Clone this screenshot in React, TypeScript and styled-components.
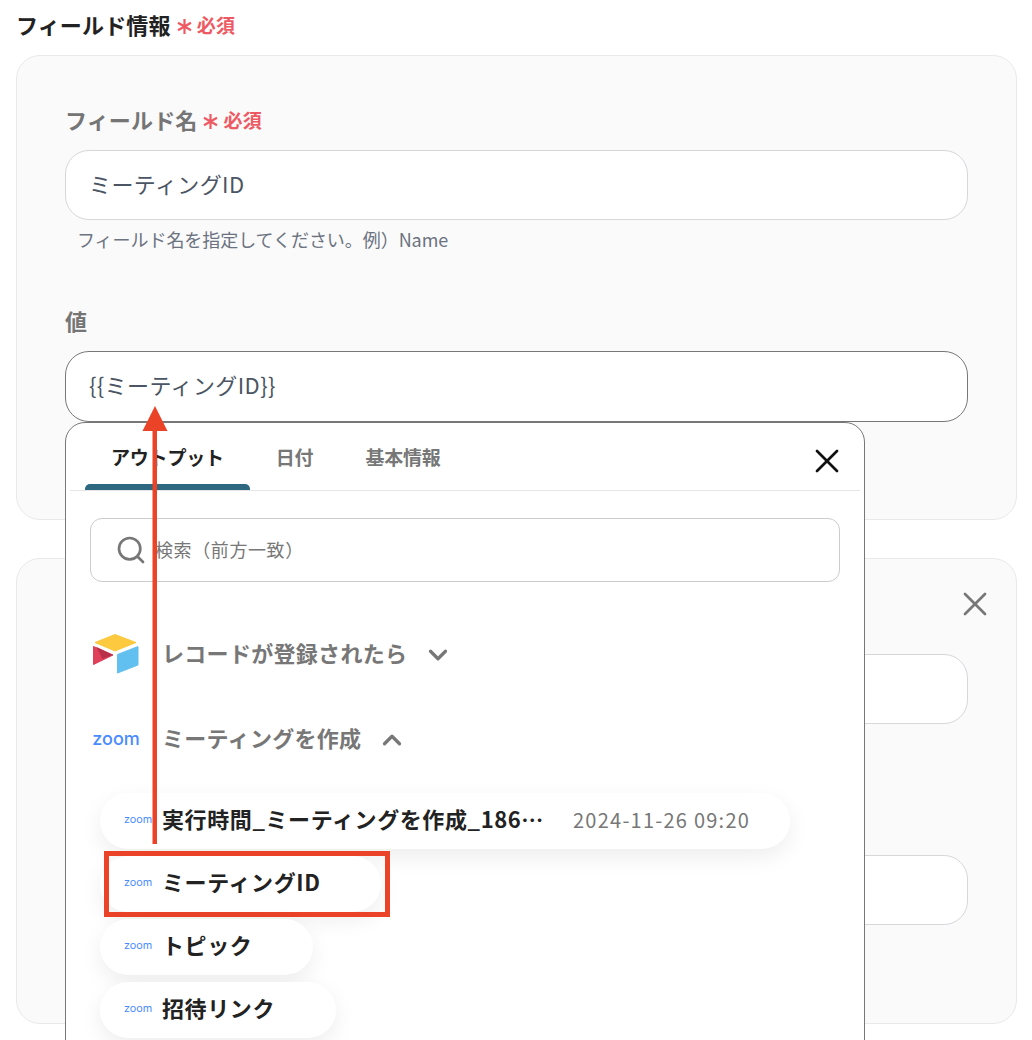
import styled, { createGlobalStyle } from "styled-components";
import { ChevronDown, ChevronUp, Search, X } from "lucide-react";

const GlobalStyle = createGlobalStyle`
  html, body {
    margin: 0;
    height: 1040px;
    overflow: hidden;
    background: #fff;
  }
  * {
    box-sizing: border-box;
  }
  body {
    font-family: "Noto Sans CJK JP", "Noto Sans", sans-serif;
  }
`;

const Page = styled.div`
  position: relative;
  height: 1040px;
  overflow: hidden;
  padding: 11px 15px 0 16px;
`;

const Heading = styled.div<{ $muted?: boolean }>`
  display: flex;
  align-items: center;
  height: 30px;
  padding-bottom: 3px;
  font-size: 22px;
  font-weight: 700;
  line-height: 27px;
  letter-spacing: 0.15px;
  color: ${(p) => (p.$muted ? "#757575" : "#222")};
`;

const Required = styled.span`
  display: inline-flex;
  align-items: center;
  margin-left: 6px;
  font-size: 19px;
  font-weight: 700;
  letter-spacing: 0.3px;
  color: #ee5a63;

  svg {
    margin-right: 5px;
    margin-top: 3px;
  }
`;

const Card = styled.section`
  position: relative;
  margin-top: 14px;
  padding: 50px 48px 97px;
  background: #fafafa;
  border: 1px solid #e9e9e9;
  border-radius: 24px;

  & + & {
    margin-top: 38px;
    padding-top: 51px;
    padding-bottom: 98px;
  }
`;

const FieldBlock = styled.div`
  position: relative;

  & + & {
    margin-top: 58px;
  }
`;

const TextBox = styled.div<{ $active?: boolean }>`
  display: flex;
  align-items: center;
  height: ${(p) => (p.$active ? 71 : 70)}px;
  margin-top: 14px;
  padding: 0 23px 5px;
  background: #fff;
  border: 1px solid ${(p) => (p.$active ? "#777" : "#d5d7da")};
  border-radius: 24px;
  font-size: 22px;
  letter-spacing: 0.4px;
  color: #4b5563;
`;

const Hint = styled.div`
  min-height: 20px;
  margin-top: 9px;
  padding-left: 12px;
  font-size: 18px;
  line-height: 20px;
  letter-spacing: -0.05px;
  color: #6b7280;
`;

const CardClose = styled.button`
  position: absolute;
  top: 25px;
  right: 21px;
  display: flex;
  padding: 0;
  border: none;
  background: none;
  color: #777;
`;

const Popup = styled.div`
  position: absolute;
  top: 100%;
  left: 0;
  z-index: 2;
  width: 800px;
  height: 640px;
  background: #fff;
  border: 1px solid #777;
  border-radius: 20px;
  padding: 0 4px;
`;

const PopupClose = styled.button`
  position: absolute;
  top: 18px;
  right: 17px;
  display: flex;
  padding: 0;
  border: none;
  background: none;
  color: #111;
`;

const Tabs = styled.div`
  display: flex;
  height: 68px;
  padding-left: 15px;
  border-bottom: 1px solid #e5e5e5;
`;

const Tab = styled.div<{ $selected?: boolean }>`
  position: relative;
  display: flex;
  align-items: center;
  padding: 0 26px;
  font-size: 19px;
  font-weight: 700;
  letter-spacing: -0.2px;
  color: ${(p) => (p.$selected ? "#222" : "#777")};

  ${(p) =>
    p.$selected &&
    `&::after {
      content: "";
      position: absolute;
      left: 0;
      right: 0;
      bottom: 0;
      height: 6px;
      background: #2d6880;
      border-radius: 5px 5px 0 0;
    }`}
`;

const SearchBox = styled.div`
  display: flex;
  align-items: center;
  gap: 8px;
  height: 64px;
  margin: 27px 20px 0;
  padding-left: 24px;
  border: 1px solid #ccc;
  border-radius: 12px;
  font-size: 18px;
  letter-spacing: 0.6px;
  color: #777;
`;

const SearchHint = styled.span`
  padding-bottom: 2px;
`;

const Groups = styled.div`
  margin-top: 29px;
  padding-left: 23px;
`;

const GroupRow = styled.div`
  display: flex;
  align-items: center;
  height: 85px;
`;

const GroupLogo = styled.div`
  display: flex;
  justify-content: center;
  width: 46px;
  margin-right: 23px;
`;

const GroupTitle = styled.span`
  padding-bottom: 3px;
  font-size: 22px;
  font-weight: 700;
  letter-spacing: 0.3px;
  color: #777;
`;

const GroupChevron = styled.span`
  display: flex;
  margin-left: 16px;
  padding-top: 3px;
  color: #777;
`;

const ZoomMark = styled.span<{ $small?: boolean }>`
  font-family: Inter, "Liberation Sans", sans-serif;
  font-size: ${(p) => (p.$small ? 10.8 : 18)}px;
  font-weight: ${(p) => (p.$small ? 400 : 500)};
  line-height: 1;
  color: #4a8cff;
`;

const Pills = styled.div`
  display: flex;
  flex-direction: column;
  align-items: flex-start;
  gap: 7px;
  margin-top: 12px;
  padding-left: 30px;
`;

const Pill = styled.div`
  position: relative;
  display: flex;
  align-items: center;
  height: 56px;
  padding: 0 42px 4px 24px;
  background: #fff;
  border-radius: 28px;
  box-shadow: 0 8px 22px rgba(0, 0, 0, 0.07);
  white-space: nowrap;
`;

const PillLogo = styled.span`
  display: flex;
  width: 30px;
  margin-right: 8px;
  padding-top: 3px;
`;

const PillLabel = styled.span`
  padding: 0 19px 2px 0;
  font-size: 22px;
  font-weight: 700;
  letter-spacing: 0.6px;
  color: #222;
`;

const PillValue = styled.span`
  margin: 0 -2px 0 10px;
  font-size: 20px;
  letter-spacing: 1.25px;
  color: #777;
`;

const Highlight = styled.span`
  position: absolute;
  top: -5px;
  left: 4px;
  right: -9px;
  bottom: -5px;
  border: 5px solid #ea4327;
`;

const Arrow = styled.svg`
  position: absolute;
  top: 406px;
  left: 142px;
  z-index: 3;
`;

function AirtableLogo() {
  return (
    <svg width="46" height="40" viewBox="0 0 46 40">
      <path d="M22 .5 43 8.5 22 17 2 8.5Z" fill="#fcc93f" stroke="#fcc93f" strokeLinejoin="round" />
      <path d="M45 12.5V31L24.5 39V20.5Z" fill="#62c0f0" stroke="#62c0f0" strokeLinejoin="round" />
      <path d="M.5 12.5 20 21 .5 30.5Z" fill="#e0405a" stroke="#e0405a" strokeLinejoin="round" />
      <path d="M3.5 13 20 21 9.5 25Z" fill="#b83049" />
    </svg>
  );
}

function RequiredMark() {
  return (
    <Required>
      <svg width="15" height="15" viewBox="0 0 15 15" stroke="#ee5a63" strokeWidth="2.2">
        <path d="M7.5 0v15M1 3.7l13 7.6M14 3.7 1 11.3" />
      </svg>
      必須
    </Required>
  );
}

function PillRow({ label, value, marked }: { label: string; value?: string; marked?: boolean }) {
  return (
    <Pill>
      <PillLogo>
        <ZoomMark $small>zoom</ZoomMark>
      </PillLogo>
      <PillLabel>{label}</PillLabel>
      {value && <PillValue>{value}</PillValue>}
      {marked && <Highlight />}
    </Pill>
  );
}

export default function App() {
  return (
    <Page>
      <GlobalStyle />

      <Heading>
        フィールド情報
        <RequiredMark />
      </Heading>

      <Card>
        <FieldBlock>
          <Heading $muted>
            フィールド名
            <RequiredMark />
          </Heading>
          <TextBox>ミーティングID</TextBox>
          <Hint>フィールド名を指定してください。例）Name</Hint>
        </FieldBlock>

        <FieldBlock>
          <Heading $muted>値</Heading>
          <TextBox $active>{"{{ミーティングID}}"}</TextBox>

          <Popup>
            <Tabs>
              <Tab $selected>アウトプット</Tab>
              <Tab>日付</Tab>
              <Tab>基本情報</Tab>
            </Tabs>
            <PopupClose>
              <X size={40} strokeWidth={1.6} />
            </PopupClose>

            <SearchBox>
              <Search size={32} strokeWidth={2} color="#777" />
              <SearchHint>検索（前方一致）</SearchHint>
            </SearchBox>

            <Groups>
              <GroupRow>
                <GroupLogo>
                  <AirtableLogo />
                </GroupLogo>
                <GroupTitle>レコードが登録されたら</GroupTitle>
                <GroupChevron>
                  <ChevronDown size={30} strokeWidth={2.6} />
                </GroupChevron>
              </GroupRow>
              <GroupRow>
                <GroupLogo>
                  <ZoomMark>zoom</ZoomMark>
                </GroupLogo>
                <GroupTitle>ミーティングを作成</GroupTitle>
                <GroupChevron>
                  <ChevronUp size={30} strokeWidth={2.6} />
                </GroupChevron>
              </GroupRow>
            </Groups>

            <Pills>
              <PillRow label="実行時間_ミーティングを作成_186…" value="2024-11-26 09:20" />
              <PillRow label="ミーティングID" marked />
              <PillRow label="トピック" />
              <PillRow label="招待リンク" />
            </Pills>
          </Popup>
        </FieldBlock>
      </Card>

      <Card>
        <CardClose>
          <X size={40} strokeWidth={1.6} />
        </CardClose>
        <FieldBlock>
          <Heading $muted />
          <TextBox />
          <Hint />
        </FieldBlock>
        <FieldBlock>
          <Heading $muted />
          <TextBox />
        </FieldBlock>
      </Card>

      <Arrow width="26" height="439" viewBox="0 0 26 439">
        <path d="M13 0 25.5 25H15V438H10.5V25H.5Z" fill="#ea4327" />
      </Arrow>
    </Page>
  );
}
